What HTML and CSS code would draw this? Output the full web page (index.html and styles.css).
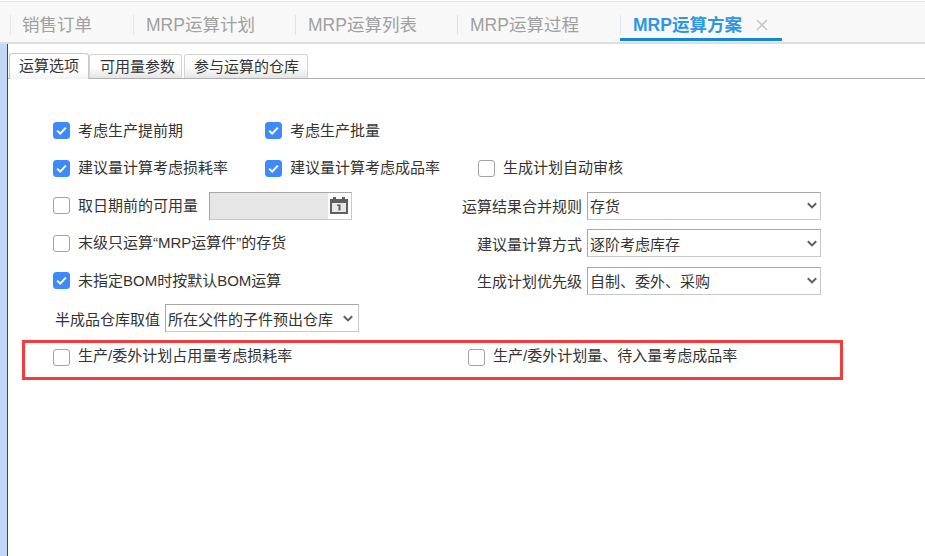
FILE: index.html
```html
<!DOCTYPE html>
<html lang="zh-CN">
<head>
<meta charset="utf-8">
<title>MRP运算方案</title>
<link rel="stylesheet" href="styles.css">
</head>
<body>
<header class="tabbar">
  <div class="tab t1">销售订单</div>
  <div class="tab t2">MRP运算计划</div>
  <div class="tab t3">MRP运算列表</div>
  <div class="tab t4">MRP运算过程</div>
  <div class="tab active">MRP运算方案<span class="close">
    <svg width="12" height="12" viewBox="0 0 12 12"><path d="M1 1l10 10M11 1L1 11" stroke="#c8c8c8" stroke-width="1.6" fill="none"/></svg></span></div>
</header>
<div class="main">
  <div class="stripe"></div>
  <div class="content">
    <nav class="subtabs">
      <div class="subtab on">运算选项</div>
      <div class="subtab s2">可用量参数</div>
      <div class="subtab s3">参与运算的仓库</div>
    </nav>
    <form class="form">
      <div class="row r1">
        <label class="check c1"><span class="box on"><svg width="11" height="9" viewBox="0 0 11 9"><path d="M1.2 4.6l3 3 5.6-6" stroke="#fff" stroke-width="2" fill="none"/></svg></span>考虑生产提前期</label>
        <label class="check"><span class="box on"><svg width="11" height="9" viewBox="0 0 11 9"><path d="M1.2 4.6l3 3 5.6-6" stroke="#fff" stroke-width="2" fill="none"/></svg></span>考虑生产批量</label>
      </div>
      <div class="row r2">
        <label class="check c1"><span class="box on"><svg width="11" height="9" viewBox="0 0 11 9"><path d="M1.2 4.6l3 3 5.6-6" stroke="#fff" stroke-width="2" fill="none"/></svg></span>建议量计算考虑损耗率</label>
        <label class="check c2"><span class="box on"><svg width="11" height="9" viewBox="0 0 11 9"><path d="M1.2 4.6l3 3 5.6-6" stroke="#fff" stroke-width="2" fill="none"/></svg></span>建议量计算考虑成品率</label>
        <label class="check"><span class="box"></span>生成计划自动审核</label>
      </div>
      <div class="row r3">
        <div class="left">
          <label class="check"><span class="box"></span>取日期前的可用量</label>
          <div class="date"><span class="date-fill"></span><span class="date-icon">
            <svg width="18" height="17" viewBox="0 0 18 17"><path d="M0 2h18v15H0z" fill="#5f5f5f"/><path d="M3 0h3v4H3zM12 0h3v4h-3z" fill="#5f5f5f"/><path d="M2 6h14v9H2z" fill="#e8e8e8"/><path d="M8.5 7.5h2v6h-2zM7 7.5h2v1.5H7z" fill="#5f5f5f"/></svg></span></div>
        </div>
        <div class="field"><span class="field-label">运算结果合并规则</span><div class="select wide"><span>存货</span><svg class="chev" width="10" height="7" viewBox="0 0 10 7"><path d="M.8 1.2L5 5.4l4.2-4.2" stroke="#5f5f5f" stroke-width="2" fill="none"/></svg></div></div>
      </div>
      <div class="row r4">
        <div class="left">
          <label class="check"><span class="box"></span>末级只运算“MRP运算件”的存货</label>
        </div>
        <div class="field"><span class="field-label">建议量计算方式</span><div class="select wide"><span>逐阶考虑库存</span><svg class="chev" width="10" height="7" viewBox="0 0 10 7"><path d="M.8 1.2L5 5.4l4.2-4.2" stroke="#5f5f5f" stroke-width="2" fill="none"/></svg></div></div>
      </div>
      <div class="row r5">
        <div class="left">
          <label class="check"><span class="box on"><svg width="11" height="9" viewBox="0 0 11 9"><path d="M1.2 4.6l3 3 5.6-6" stroke="#fff" stroke-width="2" fill="none"/></svg></span>未指定BOM时按默认BOM运算</label>
        </div>
        <div class="field"><span class="field-label">生成计划优先级</span><div class="select wide"><span>自制、委外、采购</span><svg class="chev" width="10" height="7" viewBox="0 0 10 7"><path d="M.8 1.2L5 5.4l4.2-4.2" stroke="#5f5f5f" stroke-width="2" fill="none"/></svg></div></div>
      </div>
      <div class="row r6">
        <span class="plain-label">半成品仓库取值</span>
        <div class="select narrow"><span>所在父件的子件预出仓库</span><svg class="chev" width="10" height="7" viewBox="0 0 10 7"><path d="M.8 1.2L5 5.4l4.2-4.2" stroke="#5f5f5f" stroke-width="2" fill="none"/></svg></div>
      </div>
      <div class="highlight">
        <label class="check h1"><span class="box"></span>生产/委外计划占用量考虑损耗率</label>
        <label class="check"><span class="box"></span>生产/委外计划量、待入量考虑成品率</label>
      </div>
    </form>
  </div>
</div>
</body>
</html>
```
FILE: styles.css
```css
* { box-sizing: border-box; }
html, body { margin: 0; height: 100%; }
body {
  width: 925px;
  height: 556px;
  overflow: hidden;
  background: #fff;
  font-family: "Microsoft YaHei", "Liberation Sans", "Noto Sans CJK SC", sans-serif;
  font-size: 15px;
  color: #333;
  display: flex;
  flex-direction: column;
}
.tabbar {
  height: 43px;
  margin-top: 1px;
  flex: none;
  display: flex;
  padding-left: 10px;
  background: #f8f8f8;
  border-top: 1px solid #e2e2e2;
  border-bottom: 2px solid #dedee2;
  font-size: 17.5px;
  color: #a0a0a0;
}
.tab {
  position: relative;
  height: 40px;
  padding: 7px 0 0 13px;
  line-height: 32px;
  white-space: nowrap;
}
.tab::before {
  content: "";
  position: absolute;
  left: 0;
  top: 13px;
  height: 20px;
  width: 1px;
  background: #e4e4e4;
}
.t1 { width: 123px; padding-left: 12px; }
.t2 { width: 162px; }
.t3 { width: 162px; }
.t4 { width: 163px; }
.active {
  width: 162px;
  color: #2e96e4;
  font-weight: 700;
  border-bottom: 3px solid #1488d8;
  height: 39px;
  display: flex;
}
.active::before { background: #dfe6ee; }
.close { margin-left: 14px; padding-top: 10px; line-height: 0; }
.main { flex: 1; display: flex; min-height: 0; }
.stripe {
  width: 8px;
  flex: none;
  background: #c2d7f6;
  border-right: 1px solid #1f4aa0;
}
.content { flex: 1; min-width: 0; }
.subtabs {
  height: 35px;
  padding: 9px 0 0 1px;
  display: flex;
  border-bottom: 1px solid #b0b0b0;
}
.subtab {
  height: 24px;
  margin-top: 1px;
  line-height: 23px;
  border: 1px solid #d4d4d4;
  border-bottom: 0;
  border-radius: 3px 3px 0 0;
  background: linear-gradient(#fdfdfd 55%, #e4e4e4);
  white-space: nowrap;
}
.subtab.on {
  height: 26px;
  margin-top: 0;
  padding: 0 9px;
  background: linear-gradient(#fff 70%, #f2f2f2);
  border-color: #c8c8c8;
  line-height: 24px;
}
.s2 { padding: 0 6px 0 10px; }
.s3 { padding: 0 8px 0 9px; margin-left: 2px; }
.form { padding: 33px 0 0 45px; }
.row { display: flex; align-items: center; height: 37.5px; }
.check { display: flex; align-items: center; white-space: nowrap; padding-bottom: 3px; }
.box {
  width: 17px;
  height: 17px;
  flex: none;
  margin-bottom: -3px;
  border: 1px solid #a2a2a2;
  border-radius: 3px;
  background: #fff;
  display: flex;
  align-items: center;
  justify-content: center;
}
.box.on { background: #3d8bfb; border-color: #3d8bfb; }
.check .box { margin-right: 8px; }
.c1 { width: 212px; }
.c2 { width: 213px; }
.left { width: 408px; display: flex; align-items: center; }
.date {
  width: 143px;
  height: 28px;
  margin-left: 11px;
  display: flex;
  border: 1px solid #c8c8c8;
  border-top-color: #a8a8a8;
  border-left-color: #a8a8a8;
}
.date-fill { flex: 1; background: #e6e6e6; }
.date-icon { width: 23px; padding-left: 2px; display: flex; align-items: center; background: #fff; }
.field { width: 360px; display: flex; align-items: center; justify-content: flex-end; }
.field-label { margin-right: 5px; white-space: nowrap; }
.select {
  height: 28px;
  display: flex;
  align-items: center;
  justify-content: space-between;
  background: #fff;
  border: 1px solid #c8c8c8;
  border-top-color: #a8a8a8;
  border-left-color: #a8a8a8;
  padding: 0 3px 0 2px;
  white-space: nowrap;
}
.wide { width: 234px; }
.narrow { width: 194px; margin-left: 5px; padding-right: 5px; }
.plain-label { margin-left: 2px; white-space: nowrap; }
.highlight {
  width: 821px;
  height: 40px;
  margin: 3px 0 0 -31px;
  padding: 4px 0 0 28px;
  display: flex;
  align-items: flex-start;
  border: 3px solid #f53c3c;
}
.highlight .check { padding-bottom: 0; line-height: 17px; }
.highlight .box { margin-bottom: -4px; }
.h1 { width: 415px; }
```
